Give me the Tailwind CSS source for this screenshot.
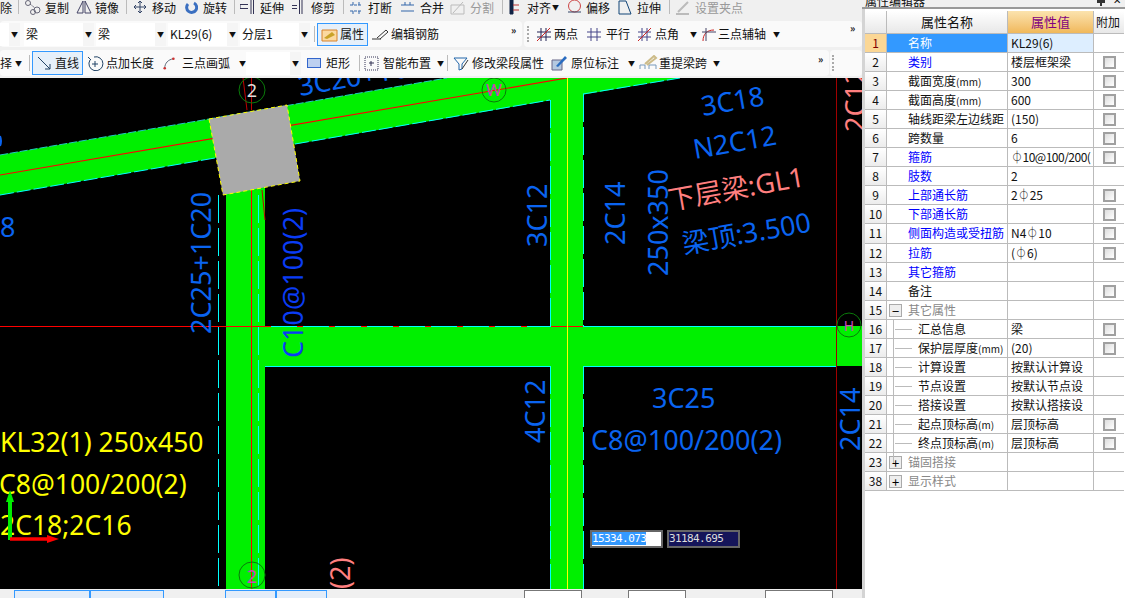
<!DOCTYPE html>
<html lang="zh">
<head>
    <meta charset="UTF-8">
    <title>属性编辑器</title>
    <script src="https://cdn.jsdelivr.net/npm/@tailwindcss/browser@4"></script>
</head>
<body class="bg-[#f0f0f0] overflow-hidden [font-family:'Noto_Sans_CJK_SC',sans-serif] text-[12px] text-[#111]">
<div class="flex w-[1125px] h-[598px] overflow-hidden">
    <!-- left: toolbars + canvas + status -->
    <div class="w-[862px] flex flex-col shrink-0">
        <div class="h-[78px] overflow-hidden whitespace-nowrap">
            <!-- row 1 -->
            <div class="h-[21px] flex items-start leading-[15px] bg-[#f0f0f0]">
                <span class="w-[18px]">除</span>
                <span class="w-[6px] h-[14px] border-l border-[#bbb]"></span>
                <div class="w-[52px] flex gap-[3px]"><svg width="18" height="15" viewBox="0 0 18 15" fill="none" stroke="#667"><circle cx="4" cy="3" r="2.5"/><circle cx="13" cy="10" r="3"/><circle cx="9" cy="12" r="2.5"/><path d="M6 4l5 4" stroke-dasharray="2 1"/></svg><span>复制</span></div>
                <div class="w-[50px] flex gap-[3px]"><svg width="16" height="15" viewBox="0 0 16 15" fill="none" stroke="#446"><path d="M7 1L1 13h6zM9 1l6 12H9z"/></svg><span>镜像</span></div>
                <span class="w-[7px] h-[14px] border-l border-[#bbb]"></span>
                <div class="w-[52px] flex gap-[5px]"><svg width="14" height="15" viewBox="0 0 14 15" fill="none" stroke="#346"><path d="M7 1v12M1 7h12M5 3l2-2 2 2M5 11l2 2 2-2M3 5L1 7l2 2M11 5l2 2-2 2"/></svg><span>移动</span></div>
                <div class="w-[49px] flex gap-[5px]"><svg width="13" height="15" viewBox="0 0 13 15" fill="none" stroke="#3a6fc0" stroke-width="3"><path d="M3 4a5 5 0 1 0 6-1"/></svg><span>旋转</span></div>
                <span class="w-[6px] h-[14px] border-l border-[#bbb]"></span>
                <div class="w-[52px] flex gap-[5px]"><svg width="15" height="15" viewBox="0 0 15 15" fill="none" stroke="#335"><path d="M0 4.500h8M0 8.500h8M0 4v5M13.500 0v14M11 0v14"/></svg><span>延伸</span></div>
                <div class="w-[51px] flex gap-[6px]"><svg width="13" height="15" viewBox="0 0 13 15" fill="none" stroke="#335"><path d="M0 5.500h5M0 8.500h5M7.500 0v14M10 0v14"/></svg><span>修剪</span></div>
                <span class="w-[6px] h-[14px] border-l border-[#bbb]"></span>
                <div class="w-[51px] flex gap-[5px]"><svg width="14" height="15" viewBox="0 0 14 15" fill="none" stroke="#36a"><path d="M1 5h12M1 11h12M4 2v3M10 2v3M4 11v3M10 11v3" stroke-dasharray="3 1"/></svg><span>打断</span></div>
                <div class="w-[50px] flex gap-[5px]"><svg width="15" height="15" viewBox="0 0 15 15" fill="none" stroke="#36a"><path d="M1 5h13M1 11h13M5 2v3M10 2v3"/></svg><span>合并</span></div>
                <div class="w-[52px] flex gap-[5px] text-[#999]"><svg width="15" height="15" viewBox="0 0 15 15" fill="none" stroke="#bbb"><path d="M1 5h13v9H1zM3 13L13 2"/></svg><span>分割</span></div>
                <span class="w-[7px] h-[14px] border-l border-[#bbb]"></span>
                <div class="w-[58px] flex gap-[7px]"><svg width="11" height="15" viewBox="0 0 11 15" fill="none" stroke="#b33"><path d="M1 0h3v14H1z" fill="#124" stroke="#124"/><path d="M4 5h6M4 10h6"/></svg><span>对齐</span><span class="text-[7px] -ml-[6px]">▼</span></div>
                <div class="w-[51px] flex gap-[4px]"><svg width="15" height="15" viewBox="0 0 15 15" fill="none" stroke="#c44"><circle cx="7.500" cy="6" r="6"/><path d="M1 12h13" stroke="#346"/></svg><span>偏移</span></div>
                <div class="w-[51px] flex gap-[5px]"><svg width="14" height="15" viewBox="0 0 14 15" fill="none" stroke="#147"><path d="M1 1h7l5 13H1z"/></svg><span>拉伸</span></div>
                <span class="w-[6px] h-[14px] border-l border-[#bbb]"></span>
                <div class="w-[75px] flex gap-[5px] text-[#999]"><svg width="15" height="15" viewBox="0 0 15 15" fill="none" stroke="#bbb" stroke-width="2"><path d="M3 12L13 2M1 14h13"/></svg><span>设置夹点</span></div>
            </div>
            <!-- row 2 -->
            <div class="h-[26px] flex">
                <div class="w-[522px] bg-[#fafafa] rounded-sm flex items-center relative">
                    <div class="w-[20px] h-[23px] bg-white flex justify-end"><span class="w-[11px] bg-[#f5f5f5] text-[7px] leading-[23px] text-center">▼</span></div>
                    <div class="w-[70px] h-[23px] bg-white ml-[4px] flex justify-between leading-[22px] pl-[2px]"><span>梁</span><span class="w-[11px] bg-[#f5f5f5] text-[7px] text-center">▼</span></div>
                    <div class="w-[70px] h-[23px] bg-white ml-[2px] flex justify-between leading-[22px] pl-[2px]"><span>梁</span><span class="w-[11px] bg-[#f5f5f5] text-[7px] text-center">▼</span></div>
                    <div class="w-[70px] h-[23px] bg-white ml-[2px] flex justify-between leading-[22px] pl-[2px]"><span>KL29(6)</span><span class="w-[11px] bg-[#f5f5f5] text-[7px] text-center">▼</span></div>
                    <div class="w-[70px] h-[23px] bg-white ml-[2px] flex justify-between leading-[22px] pl-[2px]"><span>分层1</span><span class="w-[11px] bg-[#f5f5f5] text-[7px] text-center">▼</span></div>
                    <span class="w-px h-[16px] bg-[#bbb] ml-[4px]"></span>
                    <div class="w-[51px] h-[23px] ml-[2px] border border-[#3399ff] bg-[#e6f0fa] flex items-center gap-[2px] pl-[3px]"><svg width="17" height="15" viewBox="0 0 17 15"><path d="M1 3h15v11H1z" fill="#fbd9a0" stroke="#d8822a"/><path d="M3 11l8-6 3 3-8 4z" fill="#c9a227"/></svg><span>属性</span></div>
                    <div class="ml-[4px] flex items-center gap-[2px]"><svg width="17" height="15" viewBox="0 0 17 15" fill="none" stroke="#333"><path d="M0 12h9M5 11l9-8 2 2-8 7" /></svg><span>编辑钢筋</span></div>
                    <span class="absolute left-[511px] top-[3px] font-bold text-[10px] leading-[12px]">»</span>
                </div>
                <div class="flex-1 ml-[2px] bg-[#fafafa] rounded-sm flex items-center">
                    <span class="ml-[3px] w-[3px] h-[16px] border-l-2 border-dotted border-[#aaa]"></span>
                    <div class="w-[51px] ml-[6px] flex items-center gap-[3px]"><svg width="15" height="15" viewBox="0 0 15 15" fill="none" stroke="#225"><path d="M1 5h14M1 10h14M5 1v13M10 1v13"/><path d="M1 14L14 1" stroke="#c22"/></svg><span>两点</span></div>
                    <div class="w-[51px] flex items-center gap-[5px]"><svg width="14" height="15" viewBox="0 0 14 15" fill="none" stroke="#448"><path d="M0 5h14M0 10h14M4 1v13M10 1v13"/></svg><span>平行</span></div>
                    <div class="w-[63px] flex items-center gap-[2px]"><svg width="15" height="15" viewBox="0 0 15 15" fill="none" stroke="#448"><path d="M0 5h13M0 10h13M4 1v13M9 1v13"/><path d="M0 14L13 1" stroke="#c22"/></svg><span>点角</span><span class="text-[7px] ml-[9px]">▼</span></div>
                    <div class="flex items-center gap-[2px]"><svg width="15" height="15" viewBox="0 0 15 15" fill="none" stroke="#c22"><path d="M2 14C2 7 6 3 13 3"/><path d="M5 1v13M1 5h14" stroke="#446"/></svg><span>三点辅轴</span><span class="text-[7px] ml-[5px]">▼</span></div>
                    <span class="absolute left-[850px] top-[22px] font-bold text-[10px] leading-[12px]">»</span>
                </div>
            </div>
            <div class="h-[3px]"></div>
            <!-- row 3 -->
            <div class="h-[26px] flex">
                <div class="w-[829px] bg-[#fafafa] rounded-sm flex items-center relative">
                    <span class="w-[15px] shrink-0">择</span><span class="w-[10px] shrink-0 text-[7px]">▼</span>
                    <span class="w-px h-[16px] bg-[#bbb] ml-[4px] shrink-0"></span>
                    <div class="w-[51px] shrink-0 h-[24px] ml-[2px] border border-[#3399ff] bg-[#e6f0fa] flex items-center gap-[3px] pl-[4px]"><svg width="15" height="15" viewBox="0 0 15 15" fill="none" stroke="#246"><path d="M1 1l12 12M8 13h5V8"/></svg><span>直线</span></div>
                    <div class="ml-[4px] w-[76px] shrink-0 flex items-center gap-[2px]"><svg width="17" height="16" viewBox="0 0 17 16" fill="none" stroke="#246"><path d="M3 5a7 7 0 1 0 4-3M1 2l3 3M5 9h6M8 6v6"/></svg><span>点加长度</span></div>
                    <div class="w-[83px] shrink-0 flex items-center gap-[3px]"><svg width="15" height="15" viewBox="0 0 15 15" fill="none" stroke="#456"><path d="M2 13C2 7 6 3 12 2"/><circle cx="2" cy="13" r="1.500" fill="#c33" stroke="none"/><circle cx="12" cy="2" r="1.500" fill="#c33" stroke="none"/></svg><span class="ml-[3px]">三点画弧</span><span class="text-[7px] ml-[6px]">▼</span></div>
                    <div class="w-[55px] shrink-0 h-[23px] bg-white flex justify-end"><span class="w-[11px] bg-[#f5f5f5] text-[7px] leading-[23px] text-center">▼</span></div>
                    <div class="ml-[6px] w-[52px] shrink-0 flex items-center gap-[5px]"><span class="w-[14px] h-[10px] border border-[#36c] bg-[#bcd0f0]"></span><span>矩形</span></div>
                    <span class="w-px h-[16px] bg-[#bbb] shrink-0"></span>
                    <div class="ml-[4px] w-[83px] shrink-0 flex items-center gap-[4px]"><svg width="15" height="15" viewBox="0 0 15 15" fill="none" stroke="#335"><path d="M1 1h13v13H1z" stroke-dasharray="1 1"/><path d="M7 5v5M5 7h5"/></svg><span>智能布置</span><span class="text-[7px] ml-[2px]">▼</span></div>
                    <span class="w-px h-[16px] bg-[#bbb] shrink-0"></span>
                    <div class="ml-[5px] w-[98px] shrink-0 flex items-center gap-[2px]"><svg width="17" height="15" viewBox="0 0 17 15" fill="none" stroke="#26a"><path d="M1 2h13L9 8v5l-3 1V8z"/><path d="M9 13l6-9" stroke="#333"/></svg><span>修改梁段属性</span></div>
                    <div class="w-[88px] shrink-0 flex items-center gap-[4px]"><svg width="16" height="16" viewBox="0 0 16 16"><path d="M1 5h10v10H1z" fill="#b4c8e0" stroke="#668"/><path d="M5 11l9-10 2 2-9 9z" fill="#2a6cc0"/></svg><span>原位标注</span><span class="text-[7px] ml-[5px]">▼</span></div>
                    <div class="shrink-0 flex items-center gap-[1px]"><svg width="19" height="16" viewBox="0 0 19 16" fill="none" stroke="#79b"><path d="M1 14v-4h5v4M10 14v-4h7v4"/><path d="M6 9l9-8 2 2-9 7" stroke="#cb8" stroke-width="2"/></svg><span>重提梁跨</span><span class="text-[7px] ml-[5px]">▼</span></div>
                    <span class="absolute left-[818px] top-[3px] font-bold text-[10px] leading-[12px]">»</span>
                </div>
                <div class="flex-1 ml-[1px] bg-[#fafafa] rounded-sm flex items-center"><span class="ml-[2px] w-[3px] h-[16px] border-l-2 border-dotted border-[#aaa]"></span></div>
            </div>
        </div>

        <!-- drawing canvas -->
        <div class="relative h-[511px] bg-black overflow-hidden">
            <svg width="862" height="511" viewBox="0 78 862 511" class="block [font-family:'Noto_Sans','Noto_Sans_CJK_SC',sans-serif]">
                <!-- beams -->
                <path d="M0 155L447 78H680L0 195Z" fill="#00f000"/>
                <path d="M226 157H265V589H226ZM550 78H583V589H550ZM226 326H862V366H226Z" fill="#00f000"/>
                <path d="M0 155L447 78" stroke="#20c8c0" stroke-dasharray="8 2"/>
                <path d="M0 195L215 158M295 144L550 100M583 94L680 78" stroke="#00ffff" stroke-dasharray="14 3"/>
                <path d="M0 175L567 78" stroke="#ff0000" stroke-width="1.200"/>
                <path d="M550.500 100V326M583.500 94V326M550.500 366V589M583.500 366V589M218.500 195V589M258.500 195V589" stroke="#00ffff" stroke-dasharray="28 5"/>
                <path d="M265 326.500H551M583 326.500H836M265 366.500H551M583 366.500H836" stroke="#00ffff"/>
                <path d="M0 326.500H265M551 326.500H583" stroke="#ff0000"/>
                <path d="M265 326.500H551" stroke="#ff0000" stroke-dasharray="6 26"/>
                <path d="M251.500 190V589" stroke="#ff0000"/>
                <path d="M567.500 78V589" stroke="#ffff00"/>
                <path d="M836.500 78V589" stroke="#a00000"/>
                <path d="M243 78L247 110M251.500 78V110M262 190L265 220" stroke="#c00000"/>
                <!-- column -->
                <path d="M209 119L287 105L300 181L223 195Z" fill="#aaaaaa" stroke="#ffff00" stroke-dasharray="4 3"/>
                <!-- axis bubbles -->
                <circle cx="252" cy="90" r="13" fill="none" stroke="#0a7a0a"/>
                <text x="252" y="97" text-anchor="middle" class="text-[18px] fill-[#dddddd]">2</text>
                <circle cx="494" cy="90" r="12" fill="none" stroke="#0a7a0a"/>
                <text x="494" y="96" text-anchor="middle" class="text-[17px] fill-[#cc44bb]">W</text>
                <circle cx="252" cy="575" r="13" fill="none" stroke="#0a7a0a"/>
                <text x="252" y="583" text-anchor="middle" class="text-[18px] fill-[#cc44bb]">2</text>
                <circle cx="849" cy="325" r="12" fill="none" stroke="#0a7a0a"/>
                <text x="849" y="331" text-anchor="middle" class="text-[14px] fill-[#cc44bb]">H</text>
                <!-- blue labels -->
                <path d="M0 136Q2 141 0 146" fill="none" stroke="#0a64f0" stroke-width="2"/>
                <g class="text-[27px] fill-[#0a64f0]">
                    <text transform="translate(300 96) rotate(-10)">3C20+1C20</text>
                    <text x="0" y="237">8</text>
                    <text transform="translate(211 334) rotate(-90)">2C25+1C20</text>
                    <text transform="translate(547 247) rotate(-90)">3C12</text>
                    <text transform="translate(625 245) rotate(-90)">2C14</text>
                    <text transform="translate(668 276) rotate(-90)">250x350</text>
                    <text transform="translate(703 116) rotate(-10)">3C18</text>
                    <text transform="translate(695 159) rotate(-10)">N2C12</text>
                    <text transform="translate(684 254) rotate(-10)">梁顶:3.500</text>
                    <text transform="translate(545 443) rotate(-90)">4C12</text>
                    <text transform="translate(860 451) rotate(-90)">2C14</text>
                    <text x="652" y="408">3C25</text>
                    <text x="591" y="450">C8@100/200(2)</text>
                </g>
                <text transform="translate(303 358) rotate(-90)" class="text-[27px] fill-[#0a3cf5]">C10@100(2)</text>
                <!-- pink labels -->
                <g class="text-[27px] fill-[#ff7f7f]">
                    <text transform="translate(670 210) rotate(-10)">下层梁:GL1</text>
                    <text transform="translate(865 132) rotate(-90)">2C12</text>
                    <text transform="translate(350 589) rotate(-90)">(2)</text>
                </g>
                <!-- yellow labels -->
                <g class="text-[26.5px] fill-[#ffff00]">
                    <text x="0" y="452">KL32(1) 250x450</text>
                    <text x="-1" y="494">C8@100/200(2)</text>
                    <text x="0" y="535">2C18;2C16</text>
                </g>
                <!-- ucs -->
                <path d="M10 540V500" stroke="#00ee00" stroke-width="4"/>
                <path d="M10 490L6 502H14Z" fill="#00ee00"/>
                <path d="M10 539H50" stroke="#ff0000" stroke-width="3.500"/>
                <path d="M59 539L47 535V543Z" fill="#ff0000"/>
            </svg>
            <!-- dynamic input boxes -->
            <div class="absolute left-[590px] top-[452px] w-[73px] h-[18px] bg-white border-2 border-[#666] text-[11px] leading-[14px] tracking-[-0.6px] [font-family:'DejaVu_Sans_Mono',monospace]"><span class="bg-[#3399ff] text-white">15334.073</span></div>
            <div class="absolute left-[667px] top-[452px] w-[73px] h-[18px] bg-[#15155a] border-2 border-[#666] text-[11px] leading-[14px] tracking-[-0.6px] text-[#ddd] [font-family:'DejaVu_Sans_Mono',monospace]">31184.695</div>
        </div>

        <!-- status bar, cut by the window edge -->
        <div class="h-[9px] bg-[#f0f0f0] flex pl-[14px] pt-[1px] overflow-hidden">
            <div class="w-[76px] h-[12px] bg-[#e3edf9] border border-[#3399ff]"></div>
            <div class="w-[74px] h-[12px] bg-[#e3edf9] border border-[#3399ff]"></div>
            <div class="w-[51px] h-[12px] ml-[61px] bg-[#e3edf9] border border-[#3399ff]"></div>
            <div class="w-[51px] h-[12px] bg-[#e3edf9] border border-[#3399ff]"></div>
            <div class="w-[58px] h-[12px] ml-[197px] bg-white border border-[#777]"></div>
            <div class="w-[58px] h-[12px] ml-[46px] bg-white border border-[#777]"></div>
            <div class="w-[68px] h-[12px] ml-[79px] bg-white border border-[#777]"></div>
        </div>
    </div>

    <!-- property editor -->
    <div class="w-[263px] shrink-0 bg-white flex flex-col relative">
        <div class="h-[9px] bg-[#f0f0f0] border-b-2 border-[#999] relative overflow-hidden">
            <span class="absolute left-[3px] -top-[8px] text-[12px]">属性编辑器</span>
            <span class="absolute left-[251px] -top-[7px] text-[10px] leading-[14px]">✕</span>
            <span class="absolute left-[238px] top-0 w-[2px] h-[6px] bg-[#333]"></span>
            <span class="absolute left-[235px] top-0 w-[8px] h-[3px] bg-[#333]"></span>
        </div>
        <div class="flex-1 border-l-[3px] border-[#d4d4d4] relative" id="sheet">
            <div class="grid grid-cols-[22px_121px_86px_30px] h-[23px] ml-0 mt-[2px] text-[13px] text-center leading-[22px]">
                <div class="bg-linear-to-b from-white to-[#e8e8e8] border-r border-b border-[#bbb]"></div>
                <div class="bg-linear-to-b from-white to-[#e8e8e8] border-r border-b border-[#bbb]">属性名称</div>
                <div class="bg-linear-to-b from-[#fbe3ae] to-[#f0b85a] border-r border-b border-[#bbb] text-[#800080]">属性值</div>
                <div class="bg-linear-to-b from-white to-[#e8e8e8] border-b border-[#bbb] text-left pl-[2px] text-[12px]">附加</div>
            </div>
            <div id="rows"></div>
            <span class="absolute left-[28px] top-[310px] w-px h-[144px] bg-[#bbb]"></span>
        </div>
    </div>
</div>
<script>
    // no, name, value, checkbox, style: b = link blue, m/p = grey group, c = child row
    const mm = '<span class="text-[10px]">(mm)</span>';
    const m = '<span class="text-[10px]">(m)</span>';
    const rows = [
        [1, '名称', 'KL29(6)', 0, 's'], [2, '类别', '楼层框架梁', 1, 'b'], [3, '截面宽度' + mm, '300', 1, ''], [4, '截面高度' + mm, '600', 1, ''],
        [5, '轴线距梁左边线距', '(150)', 1, ''], [6, '跨数量', '6', 1, ''], [7, '箍筋', '<span class="tracking-[-0.5px]">⏀10@100/200(</span>', 1, 'b'], [8, '肢数', '2', 0, 'b'],
        [9, '上部通长筋', '2⏀25', 1, 'b'], [10, '下部通长筋', '', 1, 'b'], [11, '侧面构造或受扭筋', 'N4⏀10', 1, 'b'], [12, '拉筋', '(⏀6)', 1, 'b'],
        [13, '其它箍筋', '', 0, 'b'], [14, '备注', '', 1, ''], [15, '其它属性', '', 0, 'm'], [16, '汇总信息', '梁', 1, 'c'],
        [17, '保护层厚度' + mm, '(20)', 1, 'c'], [18, '计算设置', '按默认计算设', 0, 'c'], [19, '节点设置', '按默认节点设', 0, 'c'], [20, '搭接设置', '按默认搭接设', 0, 'c'],
        [21, '起点顶标高' + m, '层顶标高', 1, 'c'], [22, '终点顶标高' + m, '层顶标高', 1, 'c'], [23, '锚固搭接', '', 0, 'p'], [38, '显示样式', '', 0, 'p']
    ];
    const box = '<span class="block w-[13px] h-[13px] mt-[3px] ml-[9px] border-2 border-[#a0a0a0] bg-linear-to-br from-[#ddd] to-white"></span>';
    document.getElementById('rows').innerHTML = rows.map(([no, name, val, chk, k]) => {
        const sel = k === 's';
        const nameCls = sel ? 'bg-[#3399ff] text-white pl-[21px]' : k === 'b' ? 'text-[#0000ff] pl-[21px]' : k === 'c' ? 'pl-[31px]' : 'pl-[21px]';
        const grey = k === 'm' || k === 'p';
        const sign = k === 'm' ? '−' : '+';
        const tick = k === 'c' ? '<span class="absolute left-[8px] top-[9px] w-[17px] h-px bg-[#bbb]"></span>' : '';
        const toggle = grey ? `<span class="absolute left-[2px] top-[3px] w-[13px] h-[13px] bg-[#eee] border border-[#aaa] text-[13px] leading-[11px] text-center text-black">${sign}</span>` : '';
        return `<div class="grid grid-cols-[22px_121px_86px_30px] h-[19.05px] leading-[18px]">
            <div class="border-r border-b border-[#bbb] text-center ${sel ? 'bg-[#fbd795] text-[#800000]' : 'bg-linear-to-b from-white to-[#ececec]'}">${no}</div>
            <div class="relative border-r border-b border-[#bbb] whitespace-nowrap overflow-hidden ${nameCls} ${grey ? 'text-[#888]' : ''}">${tick}${toggle}${name}</div>
            <div class="border-r border-b border-[#bbb] pl-[3px] whitespace-nowrap overflow-hidden ${sel ? 'bg-[#ddeeff]' : ''}">${val}</div>
            <div class="border-b border-[#bbb]">${chk ? box : ''}</div>
        </div>`;
    }).join('');
</script>
</body>
</html>
